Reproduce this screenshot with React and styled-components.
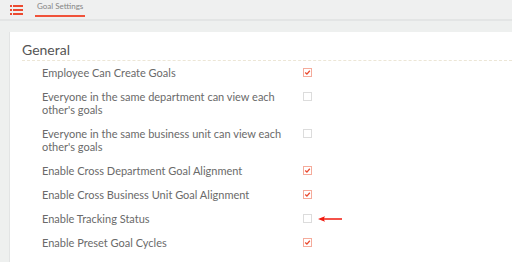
import React from "react";
import styled, { createGlobalStyle } from "styled-components";

const Global = createGlobalStyle`
  html, body { margin: 0; padding: 0; background: #eef0ef; }
  body { font-family: Lato, "Open Sans", sans-serif; }
`;

const Page = styled.div`
  width: 512px;
  height: 262px;
  overflow: hidden;
  background: #eef0ef;
`;

const TopBar = styled.div`
  height: 19px;
  display: flex;
  align-items: stretch;
  padding-left: 10px;
  background: #eff0f0;
  border-bottom: 2px solid #e3e5e5;
`;

const MenuButton = styled.div`
  display: flex;
  align-items: center;
  padding-top: 1px;
  margin-right: 11px;
`;

const Tab = styled.div`
  display: flex;
  align-items: center;
  padding: 0 2px 3px;
  margin-left: 1px;
  font-size: 8px;
  color: #858585;
  border-bottom: 2px solid ${(p) => (p.$active ? "#f0533b" : "transparent")};
  height: 17px;
  box-sizing: border-box;
`;

const Body = styled.div`
  padding: 11px 0 0 9px;
`;

const Card = styled.div`
  background: #fff;
  border-left: 1px solid #e2e4e4;
  padding: 9px 0 0 12px;
  height: 240px;
`;

const Heading = styled.h2`
  margin: 0;
  font-size: 14px;
  line-height: 17px;
  font-weight: 400;
  color: #555;
  padding-bottom: 2px;
  border-bottom: 1px dashed #ece6d6;
`;

const Row = styled.div`
  display: grid;
  grid-template-columns: 257px 12px;
  column-gap: 4px;
  padding: 5px 0 6px 20px;
`;

const Label = styled.div`
  font-size: 11px;
  line-height: 13px;
  color: #6a6a6a;
`;

const CheckCell = styled.div`
  position: relative;
  height: 13px;
  display: flex;
  align-items: center;
`;

const Box = styled.span`
  box-sizing: border-box;
  width: 9px;
  height: 9px;
  border: 1px solid ${(p) => (p.$checked ? "#f5ab9b" : "#dcdcdc")};
  background: #fff;
  display: flex;
  align-items: center;
  justify-content: center;
`;

const Arrow = styled.svg`
  position: absolute;
  left: 15px;
  top: 4px;
`;

const rows = [
  { label: "Employee Can Create Goals", checked: true },
  { label: "Everyone in the same department can view each other's goals", checked: false },
  { label: "Everyone in the same business unit can view each other's goals", checked: false },
  { label: "Enable Cross Department Goal Alignment", checked: true },
  { label: "Enable Cross Business Unit Goal Alignment", checked: true },
  { label: "Enable Tracking Status", checked: false, arrow: true },
  { label: "Enable Preset Goal Cycles", checked: true },
];

function MenuIcon() {
  return (
    <svg width="13" height="10" viewBox="0 0 13 10">
      <g fill="#ec4a30">
        <rect x="0" y="0" width="2" height="2" />
        <rect x="3" y="0" width="10" height="2" />
        <rect x="0" y="4" width="2" height="2" />
        <rect x="3" y="4" width="10" height="2" />
        <rect x="0" y="8" width="2" height="2" />
        <rect x="3" y="8" width="10" height="2" />
      </g>
    </svg>
  );
}

function Check() {
  return (
    <svg width="7" height="7" viewBox="0 0 7 7">
      <path d="M1.2 3.6 L2.9 5.1 L5.8 1.8" fill="none" stroke="#ea4a2f" strokeWidth="1.3" />
    </svg>
  );
}

export default function App() {
  return (
    <Page>
      <Global />
      <TopBar>
        <MenuButton>
          <MenuIcon />
        </MenuButton>
        <Tab $active>Goal Settings</Tab>
      </TopBar>
      <Body>
        <Card>
          <Heading>General</Heading>
          {rows.map((r) => (
            <Row key={r.label}>
              <Label>{r.label}</Label>
              <CheckCell>
                <Box $checked={r.checked}>{r.checked && <Check />}</Box>
                {r.arrow && (
                  <Arrow width="26" height="6" viewBox="0 0 26 6">
                    <path d="M0 3 L7 0.2 L6 2.2 L24 2.2 L24 3.8 L6 3.8 L7 5.8 Z" fill="#f11a0f" />
                  </Arrow>
                )}
              </CheckCell>
            </Row>
          ))}
        </Card>
      </Body>
    </Page>
  );
}
